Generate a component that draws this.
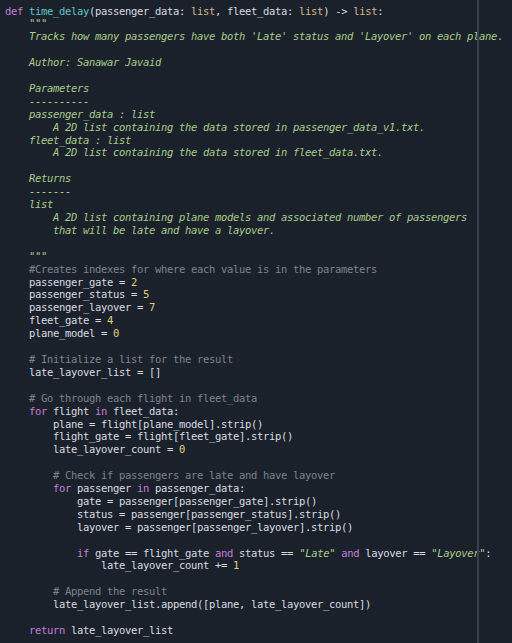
import React from "react";

type Tok = [string, string];

const KW = "text-[#c27ed9]";
const FN = "text-[#5fc4c9]";
const TY = "text-[#d6b48a]";
const DOC = "text-[#a8cc8a] italic";
const CM = "text-[#7b838f]";
const NUM = "text-[#e0cf7a]";
const P = "text-[#d8dbe0]";

const d = (s: string): Tok[] => [[DOC, s]];
const c = (s: string): Tok[] => [[CM, s]];
const p = (s: string): Tok[] => [[P, s]];

const lines: Tok[][] = [
  [
    [KW, "def "],
    [FN, "time_delay"],
    [P, "(passenger_data: "],
    [TY, "list"],
    [P, ", fleet_data: "],
    [TY, "list"],
    [P, ") -> "],
    [TY, "list"],
    [P, ":"],
  ],
  d('    """'),
  d("    Tracks how many passengers have both 'Late' status and 'Layover' on each plane."),
  [],
  d("    Author: Sanawar Javaid"),
  [],
  d("    Parameters"),
  d("    ----------"),
  d("    passenger_data : list"),
  d("        A 2D list containing the data stored in passenger_data_v1.txt."),
  d("    fleet_data : list"),
  d("        A 2D list containing the data stored in fleet_data.txt."),
  [],
  d("    Returns"),
  d("    -------"),
  d("    list"),
  d("        A 2D list containing plane models and associated number of passengers"),
  d("        that will be late and have a layover."),
  [],
  d('    """'),
  c("    #Creates indexes for where each value is in the parameters"),
  [[P, "    passenger_gate = "], [NUM, "2"]],
  [[P, "    passenger_status = "], [NUM, "5"]],
  [[P, "    passenger_layover = "], [NUM, "7"]],
  [[P, "    fleet_gate = "], [NUM, "4"]],
  [[P, "    plane_model = "], [NUM, "0"]],
  [],
  c("    # Initialize a list for the result"),
  p("    late_layover_list = []"),
  [],
  c("    # Go through each flight in fleet_data"),
  [[KW, "    for"], [P, " flight "], [KW, "in"], [P, " fleet_data:"]],
  p("        plane = flight[plane_model].strip()"),
  p("        flight_gate = flight[fleet_gate].strip()"),
  [[P, "        late_layover_count = "], [NUM, "0"]],
  [],
  c("        # Check if passengers are late and have layover"),
  [[KW, "        for"], [P, " passenger "], [KW, "in"], [P, " passenger_data:"]],
  p("            gate = passenger[passenger_gate].strip()"),
  p("            status = passenger[passenger_status].strip()"),
  p("            layover = passenger[passenger_layover].strip()"),
  [],
  [
    [KW, "            if"],
    [P, " gate == flight_gate "],
    [KW, "and"],
    [P, " status == "],
    [DOC, '"Late"'],
    [P, " "],
    [KW, "and"],
    [P, " layover == "],
    [DOC, '"Layover"'],
    [P, ":"],
  ],
  [[P, "                late_layover_count += "], [NUM, "1"]],
  [],
  c("        # Append the result"),
  p("        late_layover_list.append([plane, late_layover_count])"),
  [],
  [[KW, "    return"], [P, " late_layover_list"]],
];

export default function App() {
  return (
    <div
      className="relative w-[512px] h-[643px] overflow-hidden bg-[#1b212b] pt-[4.5px] pl-[5px] text-[10.5px] tracking-[-0.32px] leading-[12.92px]"
      style={{ fontFamily: '"DejaVu Sans Mono", "Liberation Mono", monospace' }}
    >
      {lines.map((toks, i) => (
        <div key={i} className="h-[12.92px] whitespace-pre">
          {toks.map(([cls, s], j) => (
            <span key={j} className={cls}>
              {s}
            </span>
          ))}
        </div>
      ))}
      <div className="absolute top-0 bottom-0 left-[477px] w-[2px] bg-[#3a414e]" />
    </div>
  );
}
